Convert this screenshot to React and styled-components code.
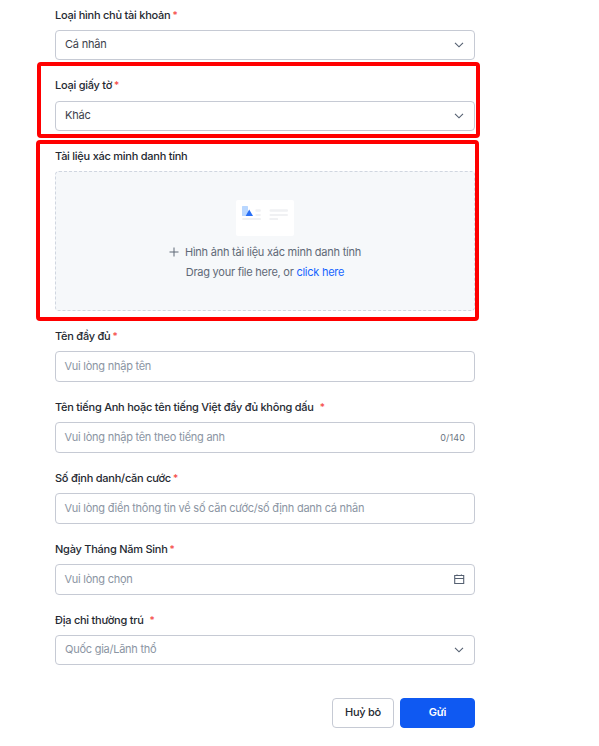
import React from 'react';
import styled, { createGlobalStyle } from 'styled-components';

const colors = {
  text: '#252931',
  secondary: '#5f6977',
  placeholder: '#8b95a3',
  border: '#c6cad4',
  primary: '#0f59f2',
  link: '#1664ff',
  required: '#f54a45',
  highlight: '#ff0000',
};

const GlobalStyle = createGlobalStyle`
  * {
    box-sizing: border-box;
  }

  body {
    margin: 0;
    background: #fff;
    color: ${colors.text};
    font-family: Inter, 'Noto Sans', sans-serif;
    font-size: 11px;
  }
`;

const Page = styled.div`
  position: relative;
  width: 599px;
  height: 746px;
  overflow: hidden;
`;

const Form = styled.form`
  display: flex;
  flex-direction: column;
  width: 420px;
  margin: 0 0 0 55px;
  padding-top: 5px;
`;

const FieldWrapper = styled.div`
  position: relative;
  height: ${({ $height }) => $height || 71}px;
`;

const Label = styled.label`
  display: flex;
  align-items: center;
  height: 20px;
  margin-bottom: ${({ $gap }) => $gap ?? 5}px;
  padding-bottom: ${({ $raised }) => ($raised ? 2 : 0)}px;
  font-weight: 500;
  letter-spacing: -0.25px;
  white-space: nowrap;
`;

const Required = styled.span`
  margin-left: ${({ $wide }) => ($wide ? 6 : 2)}px;
  color: ${colors.required};
  font-size: 10px;
  line-height: 14px;
`;

const Control = styled.div`
  display: flex;
  align-items: center;
  justify-content: space-between;
  height: ${({ $tall }) => ($tall ? 31 : 30)}px;
  padding: 0 9px;
  border: 1px solid ${colors.border};
  border-radius: 4px;
  background: #fff;
  color: ${({ $filled }) => ($filled ? '#3b414b' : colors.placeholder)};

  svg {
    flex: none;
    color: #566172;
  }
`;

const Value = styled.span`
  margin-left: ${({ $shifted }) => ($shifted ? -0.5 : 0)}px;
  padding-bottom: 2px;
  letter-spacing: ${({ $filled }) => ($filled ? '-0.2px' : '-0.25px')};
  white-space: nowrap;
`;

const Counter = styled.span`
  color: #6b7482;
  font-size: 9px;
  letter-spacing: 0.15px;
`;

const Highlight = styled.div`
  position: absolute;
  top: ${({ $top }) => $top}px;
  left: ${({ $left }) => $left}px;
  width: 443px;
  height: ${({ $height }) => $height}px;
  border: 4px solid ${colors.highlight};
  border-radius: 4px;
  pointer-events: none;
`;

const Dropzone = styled.div`
  display: flex;
  flex-direction: column;
  align-items: center;
  height: 140px;
  padding-top: 28px;
  border: 1px dashed #d0d6e0;
  border-radius: 4px;
  background: #f6f8fa;
  color: ${colors.secondary};
  letter-spacing: -0.23px;
`;

const DropTitle = styled.div`
  display: flex;
  align-items: center;
  gap: 6px;
  height: 20px;
  margin-top: 6px;
  white-space: nowrap;
`;

const DropHint = styled.div`
  height: 20px;
  line-height: 20px;
  letter-spacing: -0.25px;
  white-space: nowrap;
`;

const Link = styled.span`
  color: ${colors.link};
`;

const Actions = styled.div`
  display: flex;
  justify-content: flex-end;
  gap: 6px;
  margin-top: 17px;
`;

const Button = styled.button`
  width: ${({ $primary }) => ($primary ? 75 : 62)}px;
  height: 30px;
  padding: 0 0 2px;
  border: 1px solid ${({ $primary }) => ($primary ? colors.primary : colors.border)};
  border-radius: 4px;
  background: ${({ $primary }) => ($primary ? colors.primary : '#fff')};
  color: ${({ $primary }) => ($primary ? '#fff' : colors.text)};
  font-family: inherit;
  font-size: 11px;
  font-weight: ${({ $primary }) => ($primary ? 600 : 500)};
  letter-spacing: -0.25px;
`;

const WatermarkLayer = styled.div`
  position: absolute;
  inset: 0;
  overflow: hidden;
  pointer-events: none;
`;

const WatermarkText = styled.span`
  position: absolute;
  left: ${({ $x }) => $x}px;
  top: ${({ $y }) => $y - 24}px;
  color: rgba(0, 0, 0, 0.02);
  font-size: 21px;
  font-weight: 500;
  line-height: 24px;
  letter-spacing: 0.6px;
  white-space: nowrap;
  transform: rotate(-20deg);
  transform-origin: 0 100%;
`;

const ChevronIcon = () => (
  <svg width="11" height="6" viewBox="0 0 11 6" fill="none" stroke="currentColor" strokeWidth="1.15">
    <path d="M1 .8l4 4 4-4" />
  </svg>
);

const CalendarIcon = () => (
  <svg width="11" height="11" viewBox="0 0 11 11" fill="none" stroke="currentColor" strokeWidth="1.1">
    <path d="M.7 1.5h9v8h-9zM.7 4.5h9M3 .4v1.6M7.4 .4v1.6" />
  </svg>
);

const PlusIcon = () => (
  <svg width="10" height="10" viewBox="0 0 10 10" fill="none" stroke="currentColor">
    <path d="M5 .5v9M.5 5h9" />
  </svg>
);

const DocumentIllustration = () => (
  <svg width="58" height="36" viewBox="0 0 58 36">
    <rect width="58" height="36" rx="2" fill="#fff" />
    <rect x="6" y="6" width="6" height="10" rx="0.6" fill="#b9d7ff" />
    <path d="M13.2 9.5L17 16H9.7z" fill="#2970f6" />
    <g fill="#f0f1f3">
      <rect x="19.3" y="9.3" width="5.6" height="2.4" rx="1" />
      <rect x="19.3" y="14" width="5.6" height="2.1" rx="1" />
      <rect x="6.3" y="18" width="18.6" height="2.1" rx="0.5" />
      <rect x="33.5" y="9.3" width="18.5" height="2.4" rx="1" />
      <rect x="33.5" y="14" width="18.5" height="2.1" rx="1" />
      <rect x="33.5" y="18" width="8.5" height="2.1" rx="0.5" />
    </g>
  </svg>
);

const Field = ({ label, value, placeholder, suffix, tall, wide, raised, children }) => (
  <FieldWrapper>
    <Label $raised={raised}>
      {label}
      <Required $wide={wide}>*</Required>
    </Label>
    <Control $tall={tall} $filled={!!value}>
      <Value $filled={!!value} $shifted={tall}>
        {value || placeholder}
      </Value>
      {suffix}
    </Control>
    {children}
  </FieldWrapper>
);

// tiled diagonally, keeping only the tiles that reach into the page
const watermarks = [0, 1, 2, 3, 4, 5]
  .flatMap((row) => [-1, 0, 1].map((col) => ({ x: 59 + row * 51 + col * 453, y: 62 + row * 142.6 })))
  .filter(({ x, y }) => x > -260 && x < 599 && y + (x < 0 ? x * 0.36 : 0) > 0);

const Watermark = () => (
  <WatermarkLayer aria-hidden="true">
    {watermarks.map(({ x, y }) => (
      <WatermarkText key={`${x}-${y}`} $x={x} $y={y}>
        2026/06/23 16:08-thuc.dth
      </WatermarkText>
    ))}
  </WatermarkLayer>
);

const App = () => (
  <>
    <GlobalStyle />
    <Page>
      <Form>
        <Field label="Loại hình chủ tài khoản" value="Cá nhân" suffix={<ChevronIcon />} />
        <Field label="Loại giấy tờ" value="Khác" suffix={<ChevronIcon />} raised>
          <Highlight $top={-14} $left={-18} $height={76} />
        </Field>

        <FieldWrapper $height={179}>
          <Label $gap={4} $raised>
            Tài liệu xác minh danh tính
          </Label>
          <Dropzone>
            <DocumentIllustration />
            <DropTitle>
              <PlusIcon />
              Hình ảnh tài liệu xác minh danh tính
            </DropTitle>
            <DropHint>
              Drag your file here, or <Link>click here</Link>
            </DropHint>
          </Dropzone>
          <Highlight $top={-7} $left={-19} $height={181} />
        </FieldWrapper>

        <Field label="Tên đầy đủ" placeholder="Vui lòng nhập tên" tall />
        <Field
          label="Tên tiếng Anh hoặc tên tiếng Việt đầy đủ không dấu"
          placeholder="Vui lòng nhập tên theo tiếng anh"
          suffix={<Counter>0/140</Counter>}
          tall
          wide
        />
        <Field
          label="Số định danh/căn cước"
          placeholder="Vui lòng điền thông tin về số căn cước/số định danh cá nhân"
          tall
        />
        <Field label="Ngày Tháng Năm Sinh" placeholder="Vui lòng chọn" suffix={<CalendarIcon />} tall />
        <Field
          label="Địa chỉ thường trú"
          placeholder="Quốc gia/Lãnh thổ"
          suffix={<ChevronIcon />}
          wide
        />

        <Actions>
          <Button type="button">Huỷ bỏ</Button>
          <Button type="button" $primary>
            Gửi
          </Button>
        </Actions>
      </Form>
      <Watermark />
    </Page>
  </>
);

export default App;
